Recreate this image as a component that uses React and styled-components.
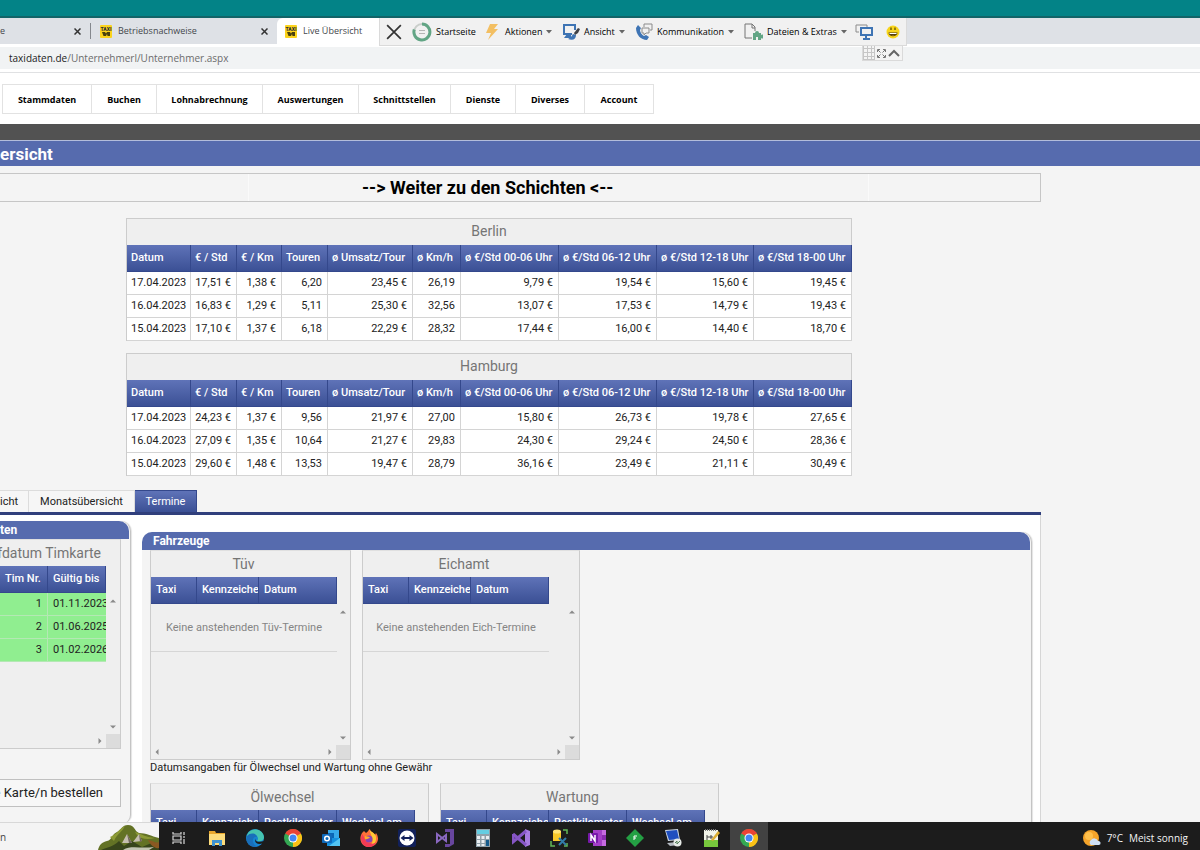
import React from "react";
import styled, { createGlobalStyle, css } from "styled-components";

const color = {
  blue: "#566bae",
  navy: "#303f7c",
  page: "#f4f4f4",
  box: "#efefef",
  line: "#cccccc",
  muted: "#757575",
};

const headerGradient = css`
  background: linear-gradient(#5f73b8, #3b5095);
  color: #fff;
`;

const uiFont = `"Open Sans", "Noto Sans", sans-serif`;

const GlobalStyle = createGlobalStyle`
  * { box-sizing: border-box; }
  html, body { margin: 0; height: 100%; overflow: hidden; }
  body { font: 11px/14px Roboto, "Liberation Sans", sans-serif; color: #222; }
  #root { height: 100%; }
  button { font: inherit; color: inherit; margin: 0; padding: 0; border: 0; background: none; }
  a { color: inherit; text-decoration: none; }
  h1, h2, p { margin: 0; }
  svg { display: block; flex: none; }
`;

const Screen = styled.div`
  display: flex;
  flex-direction: column;
  height: 100vh;
  background: ${color.page};
`;

/* Browser window */

const Browser = styled.header`
  position: relative;
  flex: none;
  font-family: ${uiFont};
  background: #fff;
`;

const TitleStrip = styled.div`
  height: 18px;
  background: #038387;
  border-bottom: 2px solid #126468;
`;

const TabStrip = styled.div`
  display: flex;
  height: 29px;
  background: linear-gradient(#dee1e6 26px, #fff 26px);
`;

const BrowserTab = styled.div`
  display: flex;
  align-items: center;
  gap: 6px;
  width: ${(p) => p.$width}px;
  height: 26px;
  padding: 0 6px 0 ${(p) => p.$start}px;
  font-size: 9px;
  color: #44474b;
  ${(p) => p.$active && css`
    height: 29px;
    padding-bottom: 3px;
    background: #fff;
    border-radius: 6px 6px 0 0;
  `}
`;

const TabTitle = styled.span`
  flex: 1;
  white-space: nowrap;
`;

const TabClose = styled.button`
  padding: 3px;
`;

const TabDivider = styled.span`
  width: 1px;
  height: 16px;
  margin-top: 5px;
  background: #85888d;
`;

const AddressBar = styled.div`
  display: flex;
  align-items: center;
  height: 22px;
  padding-left: 9px;
  background: #f1f3f4;
  font-size: 10px;
  color: #6c6c6c;
  b { font-weight: 400; color: #222; }
`;

const BrowserEdge = styled.div`
  height: 4px;
  border-bottom: 1px solid #e0e1e3;
`;

/* Remote session toolbar, floating over the browser */

const RemoteBar = styled.div`
  position: absolute;
  top: 18px;
  left: 379px;
  display: grid;
  grid-template-columns: 26px 71px 79px 73px 109px 111px 31px 20px;
  align-items: center;
  width: 528px;
  height: 28px;
  padding-left: 6px;
  background: #f1f1f1;
  border: 1px solid #dadada;
  border-top: 0;
  font-size: 9px;
  line-height: 16px;
  color: #000;
`;

const RemoteButton = styled.button`
  display: flex;
  align-items: center;
  gap: 4px;
  white-space: nowrap;
`;

const RemoteHandle = styled.div`
  position: absolute;
  top: 46px;
  left: 862px;
  display: flex;
  align-items: center;
  justify-content: space-between;
  width: 41px;
  height: 15px;
  padding-right: 2px;
  background: #f4f4f4;
  border: 1px solid #dadada;
  border-top: 0;
`;

/* Site */

const Site = styled.main`
  flex: 1;
  min-height: 0;
  overflow: hidden;
`;

const MenuArea = styled.div`
  height: 51px;
  padding: 11px 0 0 2px;
  background: #fff;
`;

const Menu = styled.nav`
  display: grid;
  grid-template-columns: 89px 65px 106px 96px 92px 65px 69px 69px;
  width: max-content;
  border: 1px solid #e2e2e2;
  border-right: 0;
`;

const MenuLink = styled.a`
  height: 28px;
  border-right: 1px solid #e2e2e2;
  text-align: center;
  font: 700 9px/30px ${uiFont};
  color: #000;
`;

const DarkBand = styled.div`
  height: 16px;
  background: #525252;
`;

const PageTitle = styled.h1`
  height: 26px;
  border-top: 1px solid #b3bddb;
  background: ${color.blue};
  color: #fff;
  font-size: 17px;
  line-height: 26px;
`;

const Content = styled.div`
  max-width: 1041px;
  padding-top: 7px;
`;

const ShiftLink = styled.a`
  display: grid;
  grid-template-columns: 248px 1fr 171px;
  height: 29px;
  border: 1px solid #c6c6c6;
  border-left: 0;
  color: #000;
  font-size: 18px;
  font-weight: 700;
  line-height: 27px;
  span {
    padding-left: 113px;
    border: solid #fafafa;
    border-width: 0 1px;
    white-space: nowrap;
  }
`;

const Cities = styled.div`
  display: flex;
  flex-direction: column;
  align-items: center;
  gap: 12px;
  padding: 16px 63px 14px 0;
`;

const Table = styled.table`
  width: ${(p) => p.$width}px;
  table-layout: fixed;
  border-collapse: separate;
  border-spacing: 0;
  ${(p) => p.$framed && css`
    border-left: 1px solid ${color.line};
  `}
`;

const Caption = styled.caption`
  height: 27px;
  border: 1px solid ${color.line};
  border-bottom: 0;
  background: ${color.box};
  color: ${color.muted};
  font-size: 14px;
  line-height: 25px;
`;

const Th = styled.th`
  height: 27px;
  padding: 0 0 0 ${(p) => p.$pad}px;
  overflow: hidden;
  white-space: nowrap;
  text-align: left;
  font-weight: 500;
  ${headerGradient}
  border-right: 1px solid #34488c;
  border-bottom: 1px solid #34488c;
`;

const Td = styled.td`
  height: 23px;
  padding: 0 5px 0 4px;
  background: ${(p) => (p.$valid ? "#90ee90" : "#fff")};
  border-right: 1px solid ${(p) => (p.$valid ? "#b4e8b4" : "#d4d4d4")};
  border-bottom: 1px solid ${(p) => (p.$valid ? "#b4e8b4" : "#d4d4d4")};
  text-align: ${(p) => (p.$left ? "left" : "right")};
  white-space: nowrap;
  overflow: hidden;
  ${(p) => p.$valid && p.$left && css`
    padding: 0 0 0 5px;
    border-right: 0;
  `}
`;

const TabList = styled.div`
  display: flex;
  height: 25px;
  border-bottom: 3px solid ${color.navy};
`;

const ViewTab = styled.button`
  width: ${(p) => p.$width}px;
  height: 22px;
  border-top: 1px solid #dcdcdc;
  border-right: 1px solid #dcdcdc;
  background: #f6f6f6;
  ${(p) => p.$cut && css`
    padding-right: 11px;
    text-align: right;
  `}
  ${(p) => p.$active && css`
    ${headerGradient}
    border-color: #34488c;
  `}
`;

const Dates = styled.div`
  display: flex;
  gap: 11px;
  align-items: flex-start;
  height: 480px;
  padding: 6px 8px 0 0;
  background: #fff;
  border-right: 1px solid #d6d6d6;
`;

const Panel = styled.section`
  background: ${color.page};
  border-right: 1px solid #c4c4c4;
  box-shadow: 1px 0 1px #e4e4e4;
`;

const DriverPanel = styled(Panel)`
  flex: none;
  width: 131px;
  height: 302px;
  border-radius: 0 10px 8px 0;
`;

const VehiclePanel = styled(Panel)`
  flex: 1;
  height: 460px;
  margin-top: 11px;
  border-radius: 10px 10px 0 0;
`;

const PanelTitle = styled.h2`
  height: 18px;
  margin-right: 1px;
  padding-left: ${(p) => p.$inset}px;
  border-radius: ${(p) => (p.$inset ? "10px 10px 0 0" : "0 10px 0 0")};
  background: ${color.blue};
  color: #fff;
  font-size: 12px;
  line-height: 19px;
`;

const BoxRow = styled.div`
  display: flex;
  gap: 11px;
  padding-left: 8px;
`;

const ScrollBox = styled.div`
  display: grid;
  grid-template-columns: minmax(0, 1fr) 14px;
  grid-template-rows: 27px 27px 1fr 14px;
  width: ${(p) => p.$width}px;
  height: 210px;
  border: 1px solid ${color.line};
  border-top-color: #e0e0e0;
  background: ${color.box};
  ${(p) => p.$cut && css`
    border-left: 0;
  `}
`;

const BoxTitle = styled.div`
  display: flex;
  justify-content: ${(p) => (p.$cut ? "flex-end" : "center")};
  padding-right: ${(p) => (p.$cut ? 5 : 0)}px;
  color: ${color.muted};
  font-size: 14px;
  line-height: 26px;
  white-space: nowrap;
`;

const BoxTable = styled.div`
  grid-row: 2 / 4;
  grid-column: 1;
  margin-top: -1px;
`;

const VerticalScroll = styled.div`
  grid-row: 3;
  grid-column: 2;
  display: flex;
  flex-direction: column;
  align-items: center;
  justify-content: space-between;
  padding: 4px 0;
`;

const HorizontalScroll = styled.div`
  grid-row: 4;
  grid-column: 1;
  display: flex;
  align-items: center;
  justify-content: space-between;
  padding: 0 3px;
`;

const ScrollCorner = styled.div`
  grid-row: 4;
  grid-column: 2;
  background: #dcdcdc;
`;

const EmptyCell = styled.td`
  height: 48px;
  padding: 0;
  border-bottom: 1px solid #d6d6d6;
  color: #858585;
  text-align: center;
`;

const Note = styled.p`
  padding: 0 0 8px 8px;
  line-height: 15px;
`;

const OrderButton = styled.button`
  display: flex;
  align-items: center;
  justify-content: flex-end;
  width: 121px;
  height: 28px;
  margin-top: 30px;
  padding-right: 17px;
  border: 1px solid #c0c0c0;
  border-left: 0;
  background: #f7f7f7;
  font-size: 13px;
  white-space: nowrap;
`;

/* Windows taskbar */

const Taskbar = styled.footer`
  position: relative;
  display: flex;
  flex: none;
  height: 28px;
  background: #1c1c1c;
  color: #f4f4f4;
  font-family: ${uiFont};
`;

const SearchBox = styled.button`
  display: flex;
  justify-content: space-between;
  align-items: center;
  width: 159px;
  margin-right: 1px;
  background: #f4f4f4;
  border-top: 1px solid #d8d8d8;
  color: #444;
  font-size: 10px;
`;

const TaskButton = styled.button`
  display: grid;
  place-items: center;
  width: 38px;
  padding-top: 3px;
  ${(p) => p.$active && css`
    background: #424242;
  `}
`;

const Weather = styled.button`
  display: flex;
  align-items: center;
  gap: 6px;
  margin-left: auto;
  padding: 4px 12px 0 0;
  font-size: 10px;
`;

/* Drawings */

const Cross = ({ size, width, stroke = "#333" }) => (
  <svg width={size} height={size} viewBox="0 0 14 14" stroke={stroke} strokeWidth={width} fill="none">
    <path d="M1 1 13 13M13 1 1 13" />
  </svg>
);

const Caret = () => (
  <svg width="6" height="4" viewBox="0 0 6 4">
    <path d="M0 0h6L3 3.5z" fill="#666" />
  </svg>
);

const arrowPaths = {
  up: "M0 4.5 3 1.5 6 4.5z",
  down: "M0 1.5h6L3 4.5z",
  left: "M4.5 0v6L1.5 3z",
  right: "M1.5 0 4.5 3 1.5 6z",
};
const Arrow = ({ dir }) => (
  <svg width="6" height="6" viewBox="0 0 6 6">
    <path d={arrowPaths[dir]} fill="#8a8a8a" />
  </svg>
);

const TaxiIcon = () => (
  <svg width="12" height="13" viewBox="0 0 12 13">
    <rect width="12" height="13" rx="1" fill="#fbd31c" />
    <text x="6" y="5.8" fontSize="5" fontWeight="900" textAnchor="middle" fill="#333" fontFamily="Roboto">TAXI</text>
    <path d="M2 7h3l1 1.5L7 7h3v4H7.500l-.5-2-1 2H3.500z" fill="#4a410d" />
  </svg>
);

const RingIcon = () => (
  <svg width="20" height="20" viewBox="0 0 20 20" fill="none">
    <circle cx="10" cy="10" r="8" stroke="#c9ceca" strokeWidth="2" />
    <path d="M10 2a8 8 0 1 1-7.700 5.500" stroke="#62a585" strokeWidth="3" />
    <path d="M7 8.500h6M7 11.500h6" stroke="#b5b5b5" />
  </svg>
);

const BoltIcon = () => (
  <svg width="18" height="18" viewBox="0 0 18 18">
    <path d="M7 1h8l-4 5h4L5 17l3-7H3z" fill="#f3bf62" />
  </svg>
);

const ViewIcon = () => (
  <svg width="18" height="18" viewBox="0 0 18 18" fill="none">
    <path d="M13 7V2H2v9h8" stroke="#3e74b4" strokeWidth="2" />
    <path d="M5 11 2 15h7v-4z" fill="#3e74b4" />
    <path d="M6 16c5 2 8 0 8-4l-3-1c-1 1-1 3-5 5z" fill="#3e74b4" />
    <path d="M12 10 16 5l2 1-2 4-3 2z" fill="#404247" />
  </svg>
);

const PhoneIcon = () => (
  <svg width="18" height="18" viewBox="0 0 18 18" fill="none">
    <path d="M1 5c0 7 5 12 11 12l2-3-3-2-2 1C7 12 5 9 5 7l1-2-3-3z" fill="#3e74b4" />
    <path d="M9 4V1h8v6h-2M7 5h7v5h-3l-2 2v-2H7z" stroke="#8b8b8b" />
  </svg>
);

const FilesIcon = () => (
  <svg width="19" height="18" viewBox="0 0 19 18" fill="none">
    <path d="M8 15H1V1h7l3 3v4M8 1v4h3" stroke="#747474" />
    <path d="M9 10h2a2 2 0 1 1 4 0h2v2a2 2 0 1 1 0 3v2h-3v-3h-2v3H9z" fill="#62a585" />
  </svg>
);

const ScreensIcon = () => (
  <svg width="18" height="18" viewBox="0 0 18 18" fill="none">
    <path d="M4 9H1V2h11v2" stroke="#8b8b8b" />
    <path d="M6 5h11v7H6z" stroke="#3e74b4" strokeWidth="2" />
    <path d="M11 13v3M8 16h7" stroke="#3e74b4" strokeWidth="2" />
  </svg>
);

const SmileIcon = () => (
  <svg width="14" height="14" viewBox="0 0 14 14">
    <circle cx="7" cy="7" r="6.500" fill="#f8d51c" />
    <path d="M5 2.500v2.500M9 2.500v2.500" stroke="#554400" strokeWidth="1.200" />
    <path d="M2.500 7.500h9c0 5-9 5-9 0z" fill="#57430b" />
    <path d="M3.500 8h7v1h-7z" fill="#fff" />
    <path d="M5 10.500h4l-2 .5z" fill="#e5a020" />
  </svg>
);

const HandleIcons = () => (
  <>
    <svg width="12" height="14" viewBox="0 0 12 14" stroke="#c6c6c6" fill="none">
      <path d="M.5 0v14M4.500 0v14M8.500 0v14M11.500 0v14M0 2.500h12M0 6.500h12M0 10.500h12M0 13.500h12" />
    </svg>
    <svg width="9" height="9" viewBox="0 0 9 9" stroke="#777" fill="none">
      <path d="M.5 3V.5H3M6 .5h2.500V3M8.500 6v2.500H6M3 8.500H.5V6M1 1l2.500 2.500M8 1 5.500 3.500M8 8 5.500 5.500M1 8l2.500-2.500" />
    </svg>
    <svg width="12" height="8" viewBox="0 0 12 8" stroke="#666" strokeWidth="2" fill="none">
      <path d="m1 7 5-5 5 5" />
    </svg>
  </>
);

const HillsArt = () => (
  <svg width="61" height="27" viewBox="0 0 61 27">
    <path d="M0 27c1-5 4-8 9-9 5-1 5-7 10-9 4-2 5-7 11-7 7 0 6 6 11 8 7 0 12 3 20 5v12z" fill="#637225" />
    <path d="M12 14c6-2 9-8 15-11-3 6-8 8-11 15zM37 9c7 2 10 5 20 6-8 2-14 1-18-3z" fill="#8c9a35" />
    <path d="M3 27c6-3 12-3 18-9l5 5 8-5 10 6 12-5 5 3v5z" fill="#38451b" />
    <path d="m24 20 5-9 5 9zM35 19l6-8 3 7z" fill="#c6bfb0" />
    <path d="m29 11 2 9h3zM41 11l1 8 2-1z" fill="#70665c" />
    <path d="M25 27c8-5 17-1 31-3l-5 3z" fill="#c3c5b3" />
    <path d="M50 17c4 0 8 4 11 2v6c-5 1-9-4-11-8z" fill="#8a5922" />
  </svg>
);

const ChromeIcon = () => (
  <svg width="18" height="18" viewBox="0 0 18 18">
    <circle cx="9" cy="9" r="9" fill="#34a853" />
    <path d="M9 9 1.200 4.500A9 9 0 0 1 16.800 4.500z" fill="#ea4335" />
    <path d="M9 9 16.800 4.500A9 9 0 0 1 9 18z" fill="#fbc116" />
    <path d="M9 4.800h7.900L16 3H7z" fill="#ea4335" />
    <circle cx="9" cy="9" r="4.500" fill="#fff" />
    <circle cx="9" cy="9" r="3.500" fill="#4285f4" />
  </svg>
);

const taskIcons = {
  "Task View": (
    <g stroke="#d8d8d8" fill="none" strokeWidth="1.2">
      <path d="M3 3v2h8V3M3 15v-2h8v2M3 7v4h8V7zM14 3v3M14 10v5M14 7v2" />
    </g>
  ),
  Explorer: (
    <>
      <path d="M1 2h6l1 2h9v12H1z" fill="#e9a72d" />
      <path d="M1 5h16v11H1z" fill="#fddc7c" />
      <path d="M4 17v-6h10v6h-3v-3H7v3z" fill="#3e92d0" />
    </>
  ),
  Edge: (
    <>
      <circle cx="9" cy="9" r="9" fill="#1684d0" />
      <path d="M1 6C4-2 17-1 18 8c0 4-4 5-7 4 2-2 1-6-3-6-3 0-5 1-7 3z" fill="#46c4b0" />
      <path d="M1 7c3-4 10-3 10 1-2-1-5 1-4 5 1 3 3 4 5 5C3 19-1 13 1 7z" fill="#196fba" />
      <path d="M10 9c-2 3 2 5 8 3l-1 2c-5 3-10-1-7-5z" fill="#1c1c1c" />
    </>
  ),
  Outlook: (
    <>
      <path d="M6 1h11v8H6z" fill="#36a9ea" />
      <path d="M6 4h6v5H6z" fill="#0a65b5" />
      <path d="M5 9h13v8H5z" fill="#1490df" />
      <path d="m7 17 11-8v8z" fill="#52c4f2" />
      <rect y="5" width="10" height="9" rx="1" fill="#0f6abb" />
      <circle cx="5" cy="9.500" r="2.300" stroke="#fff" strokeWidth="1.500" fill="none" />
    </>
  ),
  Firefox: (
    <>
      <path d="M2 4 4 2l2 2c3-2 2-3 4-4 0 3 4 3 5 6l1-2c5 7 0 14-7 14S-2 11 2 4z" fill="#ff7139" />
      <path d="M9 0c2 4 8 4 7 10 0 4-3 7-7 7 7-4 2-10 0-17z" fill="#ffc934" />
      <path d="M1 9c0 12 14 11 15 4-2 2-4 2-6 1C4 13 5 8 2 5z" fill="#f33b55" />
      <circle cx="9" cy="10" r="3.500" fill="#8a43b2" />
      <path d="M5 7c3 1 4 0 5 2-2 0-3 2-5 1z" fill="#ffad28" />
    </>
  ),
  TeamViewer: (
    <>
      <rect width="18" height="18" rx="2" fill="#11205a" />
      <circle cx="9" cy="9" r="7.500" fill="#fff" />
      <path d="m2.500 9 4-3v2h5V6l4 3-4 3v-2h-5v2z" fill="#11205a" />
    </>
  ),
  "Visual Studio Classic": (
    <>
      <path d="M9 0h9v15l-5 3H9v-3h5V3H9z" fill="#68469e" />
      <path d="M1 5v8l9-7v6z" stroke="#8a68c0" strokeWidth="2" fill="none" />
    </>
  ),
  Calculator: (
    <>
      <rect x="2" width="14" height="18" fill="#8fa0a9" />
      <path d="M3 1h12v4H3z" fill="#64cde1" />
      <path d="M3 7h3v3H3zM7.500 7h3v3h-3zM3 11h3v3H3zM7.500 11h3v3h-3zM3 15h3v2H3zM7.500 15h3v2h-3zM12 7h3v3h-3z" fill="#e9eef1" />
      <path d="M12 11h3v6h-3z" fill="#155b8c" />
    </>
  ),
  "Visual Studio": (
    <>
      <path d="m13 0 5 2v14l-5 2z" fill="#a77be0" />
      <path d="M1 5v8L14 2M1 5l13 11" stroke="#8656c5" strokeWidth="3" fill="none" />
    </>
  ),
  "Database Tools": (
    <>
      <path d="M3 2h8v10H3z" fill="#f7c829" />
      <ellipse cx="7" cy="2.500" rx="4" ry="2" fill="#ffe477" />
      <path d="M13 1h4v4M1 12v5h4M14 17h3v-3" stroke="#62b757" strokeWidth="1.500" fill="none" />
      <path d="m9 9 7 7M16 9l-7 7" stroke="#327ba8" strokeWidth="2" />
    </>
  ),
  OneNote: (
    <>
      <path d="M5 1h13v16H5z" fill="#c66be1" />
      <path d="M5 1h9v16H5z" fill="#a43fc8" />
      <path d="M14 6h4v5h-4z" fill="#8b2cb0" />
      <rect y="4" width="10" height="10" rx="1" fill="#7719aa" />
      <path d="M3 12V6l4 6V6" stroke="#fff" strokeWidth="1.500" fill="none" />
    </>
  ),
  "Green Diamond": (
    <>
      <path d="m9 0 9 9-9 9-9-9z" fill="#24a044" />
      <path d="M8 11V7h3M8 9h2" stroke="#fff" fill="none" />
    </>
  ),
  "Remote Desktop": (
    <>
      <path d="m1 1 13-1 2 11-12 1z" fill="#cbd6e3" />
      <path d="m2 2 11-1 2 9-10 1z" fill="#1f4fc0" />
      <path d="m3 14 10-1 2 3-9 1z" fill="#b5bac1" />
      <circle cx="13.500" cy="13.500" r="4" fill="#e6eae7" />
      <path d="m11 14 2-2v3l3-3" stroke="#56805a" fill="none" />
    </>
  ),
  "Notepad++": (
    <>
      <path d="M2 1h14v17H2z" fill="#f2f4e9" />
      <path d="M2 11h14v7H2z" fill="#78c83d" />
      <path d="M3 1h12" stroke="#777" strokeWidth="2" strokeDasharray="1 1" />
      <path d="M5 6v5M5 8h6M9 6v4" stroke="#444" />
      <path d="m9 11 7-9 2 2-7 8z" fill="#dcae32" />
    </>
  ),
};

const TaskIcon = ({ name }) =>
  name === "Chrome" ? <ChromeIcon /> : (
    <svg width="18" height="18" viewBox="0 0 18 18">{taskIcons[name]}</svg>
  );

const WeatherIcon = () => (
  <svg width="18" height="17" viewBox="0 0 18 17">
    <circle cx="8" cy="8" r="8" fill="#f5a42a" />
    <circle cx="6" cy="6" r="4" fill="#ffc04b" />
    <path d="M8 15a3 3 0 0 1 0-5 4 4 0 0 1 7 1 2 2 0 0 1 1 4z" fill="#cfe0f5" />
  </svg>
);

/* Data */

const menu = ["Stammdaten", "Buchen", "Lohnabrechnung", "Auswertungen", "Schnittstellen", "Dienste", "Diverses", "Account"];

const cityColumns = [
  ["Datum", 64], ["€ / Std", 46], ["€ / Km", 45], ["Touren", 46], ["ø Umsatz/Tour", 85], ["ø Km/h", 48],
  ["ø €/Std 00-06 Uhr", 98], ["ø €/Std 06-12 Uhr", 98], ["ø €/Std 12-18 Uhr", 97], ["ø €/Std 18-00 Uhr", 98],
];

const cities = [
  {
    name: "Berlin",
    rows: [
      ["17.04.2023", "17,51 €", "1,38 €", "6,20", "23,45 €", "26,19", "9,79 €", "19,54 €", "15,60 €", "19,45 €"],
      ["16.04.2023", "16,83 €", "1,29 €", "5,11", "25,30 €", "32,56", "13,07 €", "17,53 €", "14,79 €", "19,43 €"],
      ["15.04.2023", "17,10 €", "1,37 €", "6,18", "22,29 €", "28,32", "17,44 €", "16,00 €", "14,40 €", "18,70 €"],
    ],
  },
  {
    name: "Hamburg",
    rows: [
      ["17.04.2023", "24,23 €", "1,37 €", "9,56", "21,97 €", "27,00", "15,80 €", "26,73 €", "19,78 €", "27,65 €"],
      ["16.04.2023", "27,09 €", "1,35 €", "10,64", "21,27 €", "29,83", "24,30 €", "29,24 €", "24,50 €", "28,36 €"],
      ["15.04.2023", "29,60 €", "1,48 €", "13,53", "19,47 €", "28,79", "36,16 €", "23,49 €", "21,11 €", "30,49 €"],
    ],
  },
];

const dueColumns = [["Taxi", 46], ["Kennzeichen", 62], ["Datum", 78]];
const serviceColumns = [["Taxi", 46], ["Kennzeichen", 62], ["Restkilometer", 78], ["Wechsel am", 78]];
const cardColumns = [["Tim Nr.", 48], ["Gültig bis", 58]];
const cards = [["1", "01.11.2023"], ["2", "01.06.2025"], ["3", "01.02.2026"]];

const tasks = [
  "Task View", "Explorer", "Edge", "Chrome", "Outlook", "Firefox", "TeamViewer", "Visual Studio Classic", "Calculator",
  "Visual Studio", "Database Tools", "OneNote", "Green Diamond", "Remote Desktop", "Notepad++",
];

const sum = (columns) => columns.reduce((total, [, width]) => total + width, 0);

const DataTable = ({ columns, caption, framed, children }) => (
  <Table $width={sum(columns)} $framed={framed}>
    {caption && <Caption>{caption}</Caption>}
    <colgroup>{columns.map(([name, width]) => <col key={name} width={width} />)}</colgroup>
    <thead>
      <tr>{columns.map(([name]) => <Th key={name} scope="col" $pad={framed ? 4 : 5}>{name}</Th>)}</tr>
    </thead>
    {children && <tbody>{children}</tbody>}
  </Table>
);

const DateBox = ({ title, width, columns, empty, cut, children }) => (
  <ScrollBox $width={width} $cut={cut}>
    <BoxTitle $cut={cut}>{title}</BoxTitle>
    <BoxTable>
      <DataTable columns={columns}>
        {empty ? <tr><EmptyCell colSpan={columns.length}>{empty}</EmptyCell></tr> : children}
      </DataTable>
    </BoxTable>
    <VerticalScroll><Arrow dir="up" /><Arrow dir="down" /></VerticalScroll>
    <HorizontalScroll>{cut ? <span /> : <Arrow dir="left" />}<Arrow dir="right" /></HorizontalScroll>
    <ScrollCorner />
  </ScrollBox>
);

export default function App() {
  return (
    <Screen>
      <GlobalStyle />
      <Browser>
        <TitleStrip />
        <TabStrip>
          <BrowserTab $width={90} $start={0}>
            <TabTitle>e</TabTitle>
            <TabClose aria-label="Tab schließen"><Cross size={7} width={3} /></TabClose>
          </BrowserTab>
          <TabDivider />
          <BrowserTab $width={186} $start={9}>
            <TaxiIcon />
            <TabTitle>Betriebsnachweise</TabTitle>
            <TabClose aria-label="Tab schließen"><Cross size={7} width={3} /></TabClose>
          </BrowserTab>
          <BrowserTab $width={112} $start={8} $active>
            <TaxiIcon />
            <TabTitle>Live Übersicht</TabTitle>
          </BrowserTab>
        </TabStrip>
        <AddressBar><b>taxidaten.de</b>/Unternehmerl/Unternehmer.aspx</AddressBar>
        <BrowserEdge />
        <RemoteBar>
          <RemoteButton aria-label="Schließen"><Cross size={16} width={1.5} /></RemoteButton>
          <RemoteButton><RingIcon />Startseite</RemoteButton>
          <RemoteButton><BoltIcon />Aktionen<Caret /></RemoteButton>
          <RemoteButton><ViewIcon />Ansicht<Caret /></RemoteButton>
          <RemoteButton><PhoneIcon />Kommunikation<Caret /></RemoteButton>
          <RemoteButton><FilesIcon />Dateien &amp; Extras<Caret /></RemoteButton>
          <RemoteButton aria-label="Bildschirme"><ScreensIcon /></RemoteButton>
          <RemoteButton aria-label="Feedback"><SmileIcon /></RemoteButton>
        </RemoteBar>
        <RemoteHandle><HandleIcons /></RemoteHandle>
      </Browser>

      <Site>
        <MenuArea>
          <Menu>{menu.map((item) => <MenuLink key={item} href="#">{item}</MenuLink>)}</Menu>
        </MenuArea>
        <DarkBand />
        <PageTitle>ersicht</PageTitle>
        <Content>
          <ShiftLink href="#"><i /><span>--&gt; Weiter zu den Schichten &lt;--</span></ShiftLink>
          <Cities>
            {cities.map((city) => (
              <DataTable key={city.name} columns={cityColumns} caption={city.name} framed>
                {city.rows.map((row) => (
                  <tr key={row[0]}>{row.map((value, i) => <Td key={i}>{value}</Td>)}</tr>
                ))}
              </DataTable>
            ))}
          </Cities>

          <TabList role="tablist">
            <ViewTab role="tab" $width={29} $cut>icht</ViewTab>
            <ViewTab role="tab" $width={106}>Monatsübersicht</ViewTab>
            <ViewTab role="tab" $width={62} $active aria-selected="true">Termine</ViewTab>
          </TabList>
          <Dates>
            <DriverPanel>
              <PanelTitle $inset={0}>ten</PanelTitle>
              <DateBox title="fdatum Timkarte" width={121} columns={cardColumns} cut>
                {cards.map(([number, until]) => (
                  <tr key={number}><Td $valid>{number}</Td><Td $valid $left>{until}</Td></tr>
                ))}
              </DateBox>
              <OrderButton>e Karte/n bestellen</OrderButton>
            </DriverPanel>
            <VehiclePanel>
              <PanelTitle $inset={11}>Fahrzeuge</PanelTitle>
              <BoxRow>
                <DateBox title="Tüv" width={201} columns={dueColumns} empty="Keine anstehenden Tüv-Termine" />
                <DateBox title="Eichamt" width={218} columns={dueColumns} empty="Keine anstehenden Eich-Termine" />
              </BoxRow>
              <Note>Datumsangaben für Ölwechsel und Wartung ohne Gewähr</Note>
              <BoxRow>
                <DateBox title="Ölwechsel" width={279} columns={serviceColumns} />
                <DateBox title="Wartung" width={279} columns={serviceColumns} />
              </BoxRow>
            </VehiclePanel>
          </Dates>
        </Content>
      </Site>

      <Taskbar>
        <SearchBox><span>n</span><HillsArt /></SearchBox>
        {tasks.map((name) => (
          <TaskButton key={name} aria-label={name}><TaskIcon name={name} /></TaskButton>
        ))}
        <TaskButton $active aria-label="Chrome"><ChromeIcon /></TaskButton>
        <Weather><WeatherIcon /><span>7°C</span><span>Meist sonnig</span></Weather>
      </Taskbar>
    </Screen>
  );
}
